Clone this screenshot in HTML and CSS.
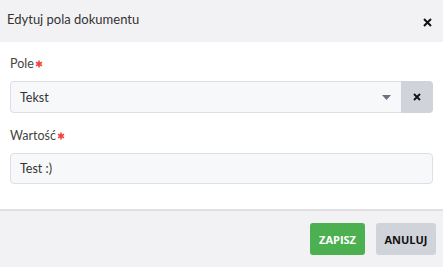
FILE: index.html
```html
<!DOCTYPE html>
<html lang="pl">
<head>
<meta charset="utf-8">
<link rel="stylesheet" href="styles.css">
</head>
<body>
<div class="dialog">
  <div class="header">
    <span class="title">Edytuj pola dokumentu</span>
    <span class="close">
      <svg width="9" height="9" viewBox="0 0 9 9"><path d="M1 1L8 8M8 1L1 8" stroke="#111" stroke-width="2"/></svg>
    </span>
  </div>
  <div class="body">
    <div class="field">
      <label class="label">Pole<svg class="req" width="8" height="8" viewBox="0 0 8 8"><path d="M4 0.5V7.5M1 2.3L7 5.7M7 2.3L1 5.7" stroke="#f0413e" stroke-width="1.6"/></svg></label>
      <div class="select">
        <div class="select-main">
          <span class="value">Tekst</span>
          <svg class="caret" width="9" height="5" viewBox="0 0 9 5"><path d="M0 0H9L4.5 5Z" fill="#6b7280"/></svg>
        </div>
        <div class="clear">
          <svg width="8" height="8" viewBox="0 0 8 8"><path d="M1 1L7 7M7 1L1 7" stroke="#111" stroke-width="1.8"/></svg>
        </div>
      </div>
    </div>
    <div class="field">
      <label class="label">Wartość<svg class="req" width="8" height="8" viewBox="0 0 8 8"><path d="M4 0.5V7.5M1 2.3L7 5.7M7 2.3L1 5.7" stroke="#f0413e" stroke-width="1.6"/></svg></label>
      <div class="input">Test :)</div>
    </div>
  </div>
  <div class="footer">
    <button class="btn btn-save">ZAPISZ</button>
    <button class="btn btn-cancel">ANULUJ</button>
  </div>
</div>
</body>
</html>
```
FILE: styles.css
```css
html, body {
  margin: 0;
  padding: 0;
  background: #fff;
}
body {
  font-family: Lato, "Open Sans", sans-serif;
  color: #333;
}
.dialog {
  width: 443px;
  height: 267px;
  display: flex;
  flex-direction: column;
}
.header {
  height: 42px;
  background: #f2f2f4;
  display: flex;
  align-items: center;
  justify-content: space-between;
  padding: 0 11px 0 7px;
  box-sizing: border-box;
}
.title {
  font-size: 13px;
  color: #333;
  margin-top: -4px;
}
.close {
  display: flex;
  margin-top: 2px;
}
.body {
  flex: 1;
  padding: 13px 10px 0 10px;
  display: flex;
  flex-direction: column;
  gap: 14px;
}
.field {
  display: flex;
  flex-direction: column;
}
.label {
  font-size: 12.5px;
  color: #444;
  line-height: 18px;
  margin-bottom: 8px;
  display: flex;
  align-items: center;
}
.req {
  margin-left: 1px;
  margin-top: -1px;
}
.select {
  display: flex;
  height: 32px;
}
.select-main {
  flex: 1;
  display: flex;
  align-items: center;
  justify-content: space-between;
  background: #f7f8fa;
  border: 1px solid #dcdfe4;
  border-right: none;
  border-radius: 4px 0 0 4px;
  padding: 0 10px 0 9px;
}
.value, .input {
  font-size: 12.5px;
  color: #333;
}
.clear {
  width: 32px;
  background: #d0d3da;
  border-radius: 0 4px 4px 0;
  display: flex;
  align-items: center;
  justify-content: center;
}
.input {
  height: 31px;
  box-sizing: border-box;
  background: #f7f8fa;
  border: 1px solid #dcdfe4;
  border-radius: 4px;
  display: flex;
  align-items: center;
  padding: 0 9px;
}
.footer {
  height: 56px;
  background: #f2f2f4;
  border-top: 2px solid #e0e0e3;
  display: flex;
  align-items: center;
  justify-content: flex-end;
  gap: 11px;
  padding: 0 7px 0 0;
}
.btn {
  height: 32px;
  border: none;
  border-radius: 3px;
  font-family: "Open Sans", sans-serif;
  font-weight: bold;
  font-size: 11px;
  padding: 0;
}
.btn-save {
  width: 55px;
  background: #4caf50;
  color: #fff;
}
.btn-cancel {
  width: 60px;
  background: #d0d3da;
  color: #111;
}
```
